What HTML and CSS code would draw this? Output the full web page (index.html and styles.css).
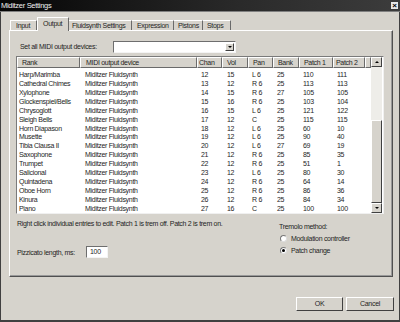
FILE: index.html
```html
<!DOCTYPE html>
<html lang="en">
<head>
  <meta charset="UTF-8">
  <title>Miditzer Settings</title>
  <link rel="stylesheet" href="styles.css">
</head>
<body>
  <div class="window">
    <div class="titlebar">
      <span class="title">Miditzer Settings</span>
      <span class="close">&#215;</span>
    </div>

    <div class="tabs">
      <div class="tab tab-input">Input</div>
      <div class="tab tab-active">Output</div>
      <div class="tab tab-fluid">Fluidsynth Settings</div>
      <div class="tab tab-expr">Expression</div>
      <div class="tab tab-pist">Pistons</div>
      <div class="tab tab-stops">Stops</div>
    </div>

    <div class="panel">
      <div class="set-all">
        <span class="set-label">Set all MIDI output devices:</span>
        <div class="combo">
          <div class="combo-btn"><span class="arrow-down"></span></div>
        </div>
      </div>

      <div class="listbox">
        <div class="list-main">
          <div class="list-head">
            <div class="hcell h-rank">Rank</div>
            <div class="hcell h-dev">MIDI output device</div>
            <div class="hcell h-chan">Chan</div>
            <div class="hcell h-vol">Vol</div>
            <div class="hcell h-pan">Pan</div>
            <div class="hcell h-bank">Bank</div>
            <div class="hcell h-p1">Patch 1</div>
            <div class="hcell h-p2">Patch 2</div>
            <div class="hcell h-rest"></div>
          </div>
          <div class="rows" id="rows"></div>
        </div>
        <div class="scrollbar">
          <div class="sb-btn"><span class="arrow-up"></span></div>
          <div class="sb-track"></div>
          <div class="sb-thumb"></div>
          <div class="sb-btn"><span class="arrow-down"></span></div>
        </div>
      </div>

      <div class="bottom">
        <div class="bottom-left">
          <div class="hint">Right click individual entries to edit. Patch 1 is trem off. Patch 2 is trem on.</div>
          <div class="pizz">
            <span class="pizz-label">Pizzicato length, ms:</span>
            <div class="textbox">100</div>
          </div>
        </div>
        <div class="bottom-right">
          <div class="trem-label">Tremolo method:</div>
          <div class="radio-row"><span class="radio"></span>Modulation controller</div>
          <div class="radio-row"><span class="radio checked"></span>Patch change</div>
        </div>
      </div>
    </div>

    <div class="buttons">
      <div class="btn">OK</div>
      <div class="btn btn-cancel">Cancel</div>
    </div>
  </div>

  <script>
    const ranks = [
      ['Harp/Marimba', 12, 15, 'L 6', 25, 110, 111],
      ['Cathedral Chimes', 13, 12, 'R 6', 25, 113, 113],
      ['Xylophone', 14, 15, 'R 6', 27, 105, 105],
      ['Glockenspiel/Bells', 15, 16, 'R 6', 25, 103, 104],
      ['Chrysoglott', 16, 15, 'L 6', 25, 121, 122],
      ['Sleigh Bells', 17, 12, 'C', 25, 115, 115],
      ['Horn Diapason', 18, 12, 'L 6', 25, 60, 10],
      ['Musette', 19, 12, 'L 6', 25, 90, 40],
      ['Tibia Clausa II', 20, 12, 'L 6', 27, 69, 19],
      ['Saxophone', 21, 12, 'R 6', 25, 85, 35],
      ['Trumpet', 22, 12, 'R 6', 25, 51, 1],
      ['Salicional', 23, 12, 'L 6', 25, 80, 30],
      ['Quintadena', 24, 12, 'R 6', 25, 64, 14],
      ['Oboe Horn', 25, 12, 'R 6', 25, 86, 36],
      ['Kinura', 26, 12, 'R 6', 25, 84, 34],
      ['Piano', 27, 16, 'C', 25, 100, 100]
    ];

    const rows = document.getElementById('rows');
    ranks.forEach(r => {
      const row = document.createElement('div');
      row.className = 'row';
      const cells = [r[0], 'Miditzer Fluidsynth', r[1], r[2], r[3], r[4], r[5], r[6]];
      cells.forEach(c => {
        const cell = document.createElement('span');
        cell.textContent = c;
        row.appendChild(cell);
      });
      rows.appendChild(row);
    });
  </script>
</body>
</html>
```

FILE: styles.css
```css
body {
  margin: 0;
  font-family: 'Liberation Sans', Arial, sans-serif;
  font-size: 7px;
  letter-spacing: -0.3px;
  color: #1e1e1e;
}
.window {
  width: 400px;
  height: 322px;
  box-sizing: border-box;
  background-color: #d6d3cc;
  border-left: 1px solid #404040;
  border-right: 1px solid #404040;
  border-bottom: 2px solid #404040;
  display: flex;
  flex-direction: column;
}
.titlebar {
  height: 11px;
  background: linear-gradient(to right, #050505, #2a2a2a 60%, #3c3c3c);
  border-bottom: 1px solid #808080;
  display: flex;
  align-items: center;
  justify-content: space-between;
  padding: 0 2px 0 1px;
  margin: 0 -1px;
}
.title {
  color: #f0f0f0;
  font-size: 7.5px;
}
.close {
  width: 7px;
  height: 7px;
  background-color: #e8e8e8;
  color: #000;
  font-size: 8px;
  font-weight: bold;
  line-height: 7px;
  text-align: center;
  letter-spacing: 0;
}

/* tabs */
.tabs {
  display: flex;
  align-items: flex-end;
  height: 13px;
  margin-top: 5px;
  padding-left: 9px;
  position: relative;
  z-index: 1;
}
.tab {
  height: 10px;
  line-height: 10px;
  border-top: 1px solid #fff;
  border-right: 1px solid #6a6a6a;
  box-sizing: border-box;
  padding-left: 5px;
  white-space: nowrap;
}
.tab-input { width: 27px; border-left: 1px solid #fff; }
.tab-active {
  width: 32px;
  line-height: 12px;
  padding-left: 5px;
  border-left: 1px solid #fff;
  background-color: #d6d3cc;
  margin-bottom: -1px;
  height: 14px;
}
.tab-fluid { width: 63px; padding-left: 3px; }
.tab-expr { width: 42px; padding-left: 5px; }
.tab-pist { width: 29px; padding-left: 4px; }
.tab-stops { width: 28px; padding-left: 4px; }

.panel {
  height: 247px;
  margin: 0 6px 0 8px;
  border-top: 1px solid #fff;
  border-left: 1px solid #fff;
  border-right: 1px solid #505050;
  border-bottom: 1px solid #505050;
  box-shadow: inset -1px -1px 0 #999;
  box-sizing: border-box;
  padding: 9px 8px 0 6px;
}
.set-all {
  display: flex;
  align-items: center;
  height: 13px;
}
.set-label {
  width: 93px;
  padding-left: 4px;
}
.combo {
  width: 123px;
  height: 12px;
  box-sizing: border-box;
  background-color: #fff;
  border-top: 1px solid #6e6e6e;
  border-left: 1px solid #6e6e6e;
  border-right: 1px solid #f4f4f4;
  border-bottom: 1px solid #f4f4f4;
  display: flex;
  justify-content: flex-end;
  padding: 1px;
}
.combo-btn, .sb-btn {
  width: 9px;
  background-color: #d6d3cc;
  border-top: 1px solid #fff;
  border-left: 1px solid #fff;
  border-right: 1px solid #404040;
  border-bottom: 1px solid #404040;
  box-sizing: border-box;
  display: flex;
  align-items: center;
  justify-content: center;
}
.arrow-down {
  border-left: 2px solid transparent;
  border-right: 2px solid transparent;
  border-top: 2px solid #000;
}
.arrow-up {
  border-left: 2px solid transparent;
  border-right: 2px solid transparent;
  border-bottom: 2px solid #000;
}

/* list */
.listbox {
  margin-top: 3px;
  width: 368px;
  height: 158px;
  box-sizing: border-box;
  border-top: 1px solid #7a7a7a;
  border-left: 1px solid #7a7a7a;
  border-right: 1px solid #f0f0f0;
  border-bottom: 1px solid #f0f0f0;
  background-color: #fff;
  display: flex;
}
.list-main {
  flex: 1;
}
.list-head {
  display: flex;
  height: 11px;
}
.hcell {
  box-sizing: border-box;
  background-color: #d6d3cc;
  border-top: 1px solid #fff;
  border-left: 1px solid #fff;
  border-right: 1px solid #6a6a6a;
  border-bottom: 1px solid #6a6a6a;
  line-height: 9px;
  padding-left: 4px;
  white-space: nowrap;
}
.h-rank { width: 63px; padding-left: 4px; }
.h-dev { width: 117px; padding-left: 5px; }
.h-chan { width: 25px; padding-left: 1px; }
.h-vol { width: 26px; padding-left: 4px; }
.h-pan { width: 25px; padding-left: 4px; }
.h-bank { width: 26px; padding-left: 4px; }
.h-p1 { width: 34px; padding-left: 4px; }
.h-p2 { width: 32px; padding-left: 2px; }
.h-rest { flex: 1; }
.rows {
  padding-top: 2px;
}
.row {
  display: grid;
  grid-template-columns: 66px 116px 26px 25px 25px 26px 34px 1fr;
  height: 8.93px;
  line-height: 9px;
  padding-left: 2px;
  white-space: nowrap;
}
.scrollbar {
  width: 11px;
  display: flex;
  flex-direction: column;
  margin-right: 1px;
}
.sb-btn {
  width: 11px;
  height: 10px;
}
.sb-track {
  height: 53px;
  background-color: #eeede9;
}
.sb-thumb {
  flex: 1;
  background-color: #d6d3cc;
  border-top: 1px solid #fff;
  border-left: 1px solid #fff;
  border-right: 1px solid #404040;
  border-bottom: 1px solid #404040;
}

/* bottom area */
.bottom {
  display: flex;
  margin-top: 5px;
}
.bottom-left {
  width: 262px;
  padding-left: 1px;
}
.hint {
  line-height: 10px;
  white-space: nowrap;
}
.pizz {
  display: flex;
  align-items: center;
  margin-top: 17px;
  height: 12px;
}
.pizz-label {
  width: 69px;
}
.textbox {
  width: 22px;
  height: 12px;
  box-sizing: border-box;
  background-color: #fff;
  border-top: 1px solid #6e6e6e;
  border-left: 1px solid #6e6e6e;
  border-right: 1px solid #f4f4f4;
  border-bottom: 1px solid #f4f4f4;
  line-height: 10px;
  padding-left: 3px;
}
.bottom-right {
  padding-top: 3px;
}
.trem-label {
  line-height: 10px;
}
.radio-row {
  display: flex;
  align-items: center;
  height: 12px;
  padding-left: 1px;
}
.radio {
  width: 7px;
  height: 7px;
  box-sizing: border-box;
  border-radius: 50%;
  background-color: #fff;
  border: 1px solid #777;
  border-right-color: #ddd;
  border-bottom-color: #ddd;
  margin-right: 4px;
  display: flex;
  align-items: center;
  justify-content: center;
}
.radio.checked::after {
  content: '';
  width: 3px;
  height: 3px;
  border-radius: 50%;
  background-color: #000;
}

.buttons {
  display: flex;
  justify-content: flex-end;
  gap: 3px;
  margin-top: 20px;
  padding-right: 5px;
}
.btn {
  width: 47px;
  height: 14px;
  box-sizing: border-box;
  border-top: 1px solid #fff;
  border-left: 1px solid #fff;
  border-right: 1px solid #404040;
  border-bottom: 1px solid #404040;
  text-align: center;
  line-height: 12px;
}
.btn-cancel {
  width: 48px;
}
```
